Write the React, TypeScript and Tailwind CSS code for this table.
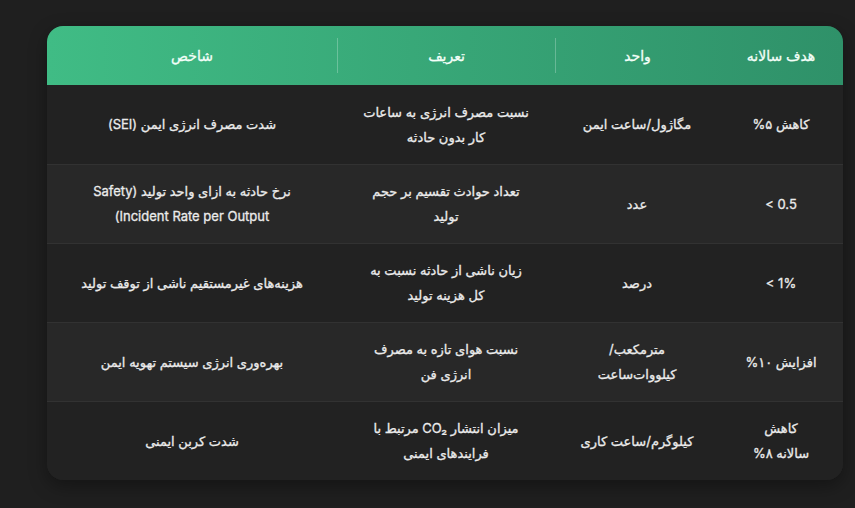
import { Fragment } from "react";

type Row = {
  target: string[];
  unit: string[];
  desc: string[];
  name: string[];
};

const rows: Row[] = [
  {
    target: ["کاهش ۵%"],
    unit: ["مگاژول/ساعت ایمن"],
    desc: ["نسبت مصرف انرژی به ساعات", "کار بدون حادثه"],
    name: ["شدت مصرف انرژی ایمن (SEI)"],
  },
  {
    target: ["0.5 >"],
    unit: ["عدد"],
    desc: ["تعداد حوادث تقسیم بر حجم", "تولید"],
    name: ["نرخ حادثه به ازای واحد تولید (Safety", "Incident Rate per Output)"],
  },
  {
    target: ["1% >"],
    unit: ["درصد"],
    desc: ["زیان ناشی از حادثه نسبت به", "کل هزینه تولید"],
    name: ["هزینه‌های غیرمستقیم ناشی از توقف تولید"],
  },
  {
    target: ["افزایش ۱۰%"],
    unit: ["مترمکعب/", "کیلووات‌ساعت"],
    desc: ["نسبت هوای تازه به مصرف", "انرژی فن"],
    name: ["بهره‌وری انرژی سیستم تهویه ایمن"],
  },
  {
    target: ["کاهش", "سالانه ۸%"],
    unit: ["کیلوگرم/ساعت کاری"],
    desc: ["میزان انتشار CO₂ مرتبط با", "فرایندهای ایمنی"],
    name: ["شدت کربن ایمنی"],
  },
];

function Cell({ lines }: { lines: string[] }) {
  return (
    <div className="flex flex-col items-center justify-center text-center px-4">
      {lines.map((l, i) => (
        <div key={i} className="leading-[25px] whitespace-nowrap">
          {l}
        </div>
      ))}
    </div>
  );
}

export default function App() {
  const heads = ["هدف سالانه", "واحد", "تعریف", "شاخص"];

  return (
    <div
      className="min-h-screen w-full bg-[#1f1f1f] pt-[26px] pl-[47px]"
      style={{ fontFamily: "Inter, 'DejaVu Sans', sans-serif" }}
    >
      <div
        dir="rtl"
        className="w-[796px] rounded-2xl overflow-hidden bg-[#222222] shadow-[0_6px_18px_rgba(0,0,0,0.35)] [-webkit-text-stroke:0.3px_currentColor]"
      >
        {/* header */}
        <div className="grid grid-cols-[124px_164px_218px_290px] h-[59px] bg-linear-to-l from-[#2f9169] to-[#40bc85] text-[#f4fff9] text-[14px] font-medium">
          {heads.map((h, i) => (
            <div key={h} className="flex items-center justify-center py-3">
              <div
                className={
                  "w-full h-full flex items-center justify-center " +
                  (i === 1 || i === 2 ? "border-l border-white/25" : "")
                }
              >
                {h}
              </div>
            </div>
          ))}
        </div>

        {/* rows */}
        {rows.map((r, i) => (
          <div
            key={i}
            className={
              "grid grid-cols-[124px_164px_218px_290px] h-[79px] text-[13px] text-[#ebebeb] " +
              (i > 0 ? "border-t border-[#323232] " : "") +
              (i % 2 === 1 ? "bg-[#282828]" : "bg-[#222222]")
            }
          >
            <Fragment>
              <Cell lines={r.target} />
              <Cell lines={r.unit} />
              <Cell lines={r.desc} />
              <Cell lines={r.name} />
            </Fragment>
          </div>
        ))}
      </div>
    </div>
  );
}
